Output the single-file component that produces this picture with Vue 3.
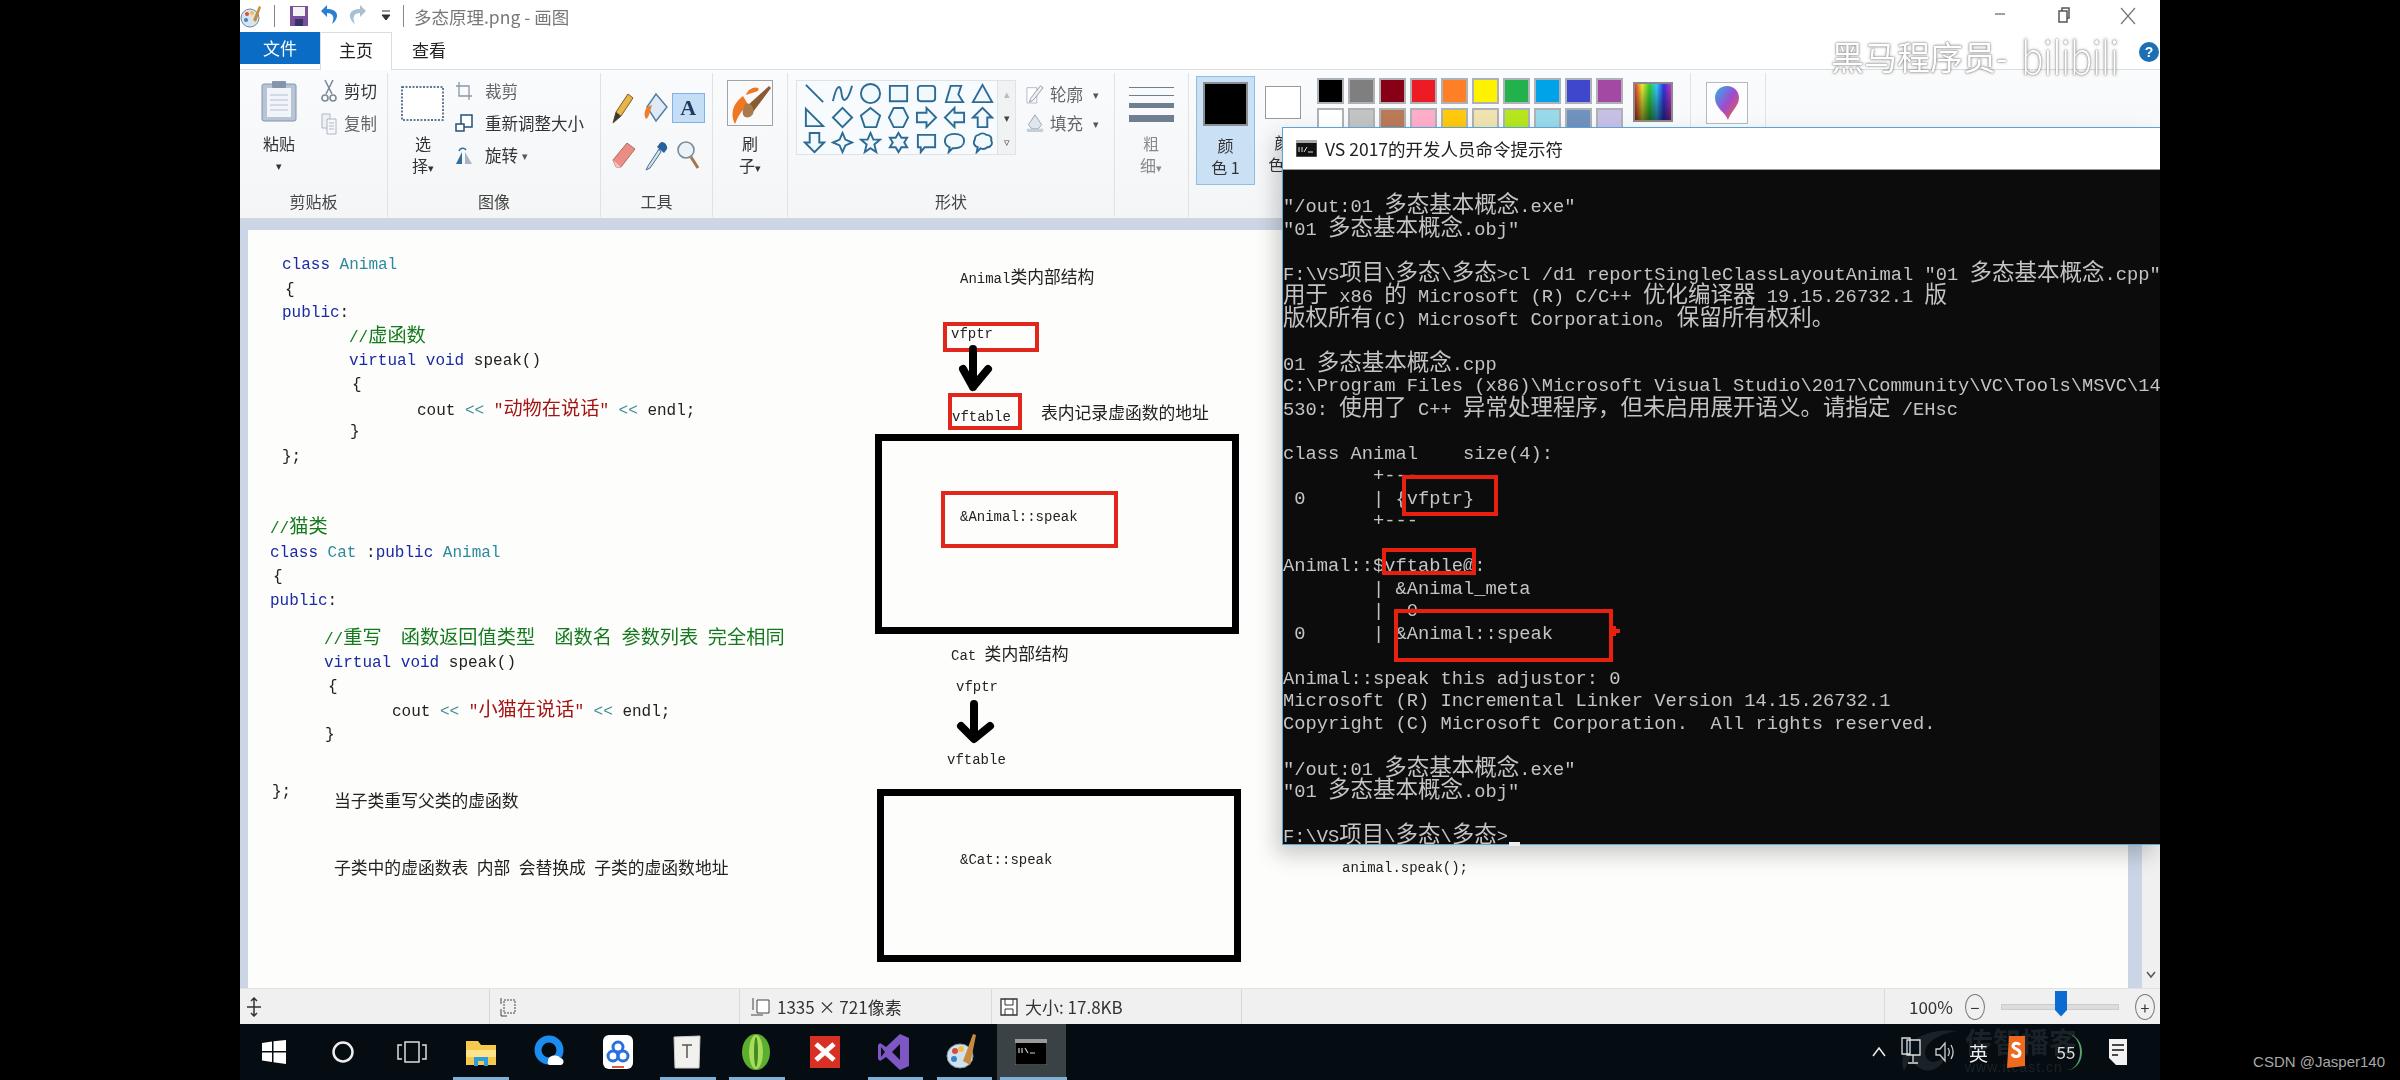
<template>
  <div class="page">
    <div class="screen">
      <!-- quick access + title -->
      <div class="titlebar">
        <svg class="q-paint" width="22" height="24" viewBox="0 0 22 24">
          <ellipse cx="10" cy="14" rx="9" ry="9" fill="#d8e4ee" stroke="#6a8aa0" />
          <circle cx="7" cy="10" r="2" fill="#e8483a" />
          <circle cx="12" cy="9" r="2" fill="#f1c232" />
          <circle cx="6" cy="16" r="2" fill="#3d85c6" />
          <path d="M13 16L19 2l2 1-5 15z" fill="#c98a3c" />
        </svg>
        <span class="q-sep q-sep-a"></span>
        <svg class="q-save" width="20" height="24" viewBox="0 0 20 24">
          <path d="M1 2h18v20H1z" fill="#7a4f9c" />
          <path d="M4 3h12v9H4z" fill="#f3f3f3" />
          <path d="M6 15h8v7H6z" fill="#37336a" />
        </svg>
        <svg class="q-undo" width="20" height="26" viewBox="0 0 20 26">
          <path d="M7 2L1 8l6 6V10c6 0 8 4 5 11 7-5 8-15-5-15z" fill="#2a7fd0" />
        </svg>
        <svg class="q-redo" width="20" height="26" viewBox="0 0 20 26">
          <path d="M13 2l6 6-6 6V10C7 10 5 14 8 21 1 16 0 6 13 6z" fill="#a9bfd2" />
        </svg>
        <svg class="q-more" width="10" height="12" viewBox="0 0 10 12">
          <path d="M1 1h8M1 5h8l-4 5z" fill="#333" stroke="#333" />
        </svg>
        <span class="q-sep q-sep-b"></span>
        <span class="doc-title">多态原理.png - 画图</span>
        <div class="win-btns">
          <span class="win-btn">
            <svg width="16" height="16" viewBox="0 0 16 16"><path d="M3 8h10" stroke="#777" stroke-width="1.4" /></svg>
          </span>
          <span class="win-btn">
            <svg width="16" height="18" viewBox="0 0 16 18"><path d="M3 5h8v11H3zM6 5V2h7v10h-2" fill="none" stroke="#555" stroke-width="1.5" /></svg>
          </span>
          <span class="win-btn">
            <svg width="18" height="20" viewBox="0 0 18 20"><path d="M2 2l14 16M16 2L2 18" stroke="#777" stroke-width="1.2" /></svg>
          </span>
        </div>
      </div>

      <!-- tabs -->
      <div class="tabs">
        <span class="tab tab-file">文件</span>
        <span class="tab tab-home">主页</span>
        <span class="tab tab-view">查看</span>
      </div>

      <!-- ribbon -->
      <div class="ribbon">
        <section class="group g-clip">
          <div class="group-body">
            <div class="big big-paste">
              <svg width="36" height="42" viewBox="0 0 36 42">
                <rect x="1" y="4" width="34" height="37" rx="2" fill="#b7c4d6" stroke="#8494aa" />
                <rect x="6" y="8" width="24" height="29" fill="#f1f4f9" />
                <rect x="11" y="1" width="14" height="7" rx="1" fill="#8494aa" />
                <path d="M9 15h18M9 20h18M9 25h18M9 30h18" stroke="#b5c0d0" />
              </svg>
              <span class="big-text">粘贴</span>
              <span class="big-text caret">▾</span>
            </div>
            <div class="small-col">
              <div class="small-row">
                <svg width="16" height="24" viewBox="0 0 16 24">
                  <path d="M4 1l7 14M12 1L5 15" stroke="#7c8a99" stroke-width="1.6" />
                  <circle cx="4" cy="19" r="3" fill="none" stroke="#7c8a99" stroke-width="1.6" />
                  <circle cx="12" cy="19" r="3" fill="none" stroke="#7c8a99" stroke-width="1.6" />
                </svg>
                <span>剪切</span>
              </div>
              <div class="small-row off">
                <svg width="16" height="24" viewBox="0 0 16 24">
                  <path d="M1 3h8v14H1z" fill="#eef1f5" stroke="#aeb8c4" />
                  <path d="M6 8h9v15H6z" fill="#f6f8fa" stroke="#aeb8c4" />
                  <path d="M8 12h5M8 15h5M8 18h5" stroke="#aeb8c4" />
                </svg>
                <span>复制</span>
              </div>
            </div>
          </div>
          <div class="group-label">剪贴板</div>
        </section>

        <section class="group g-image">
          <div class="group-body">
            <div class="big big-select">
              <svg width="44" height="42" viewBox="0 0 44 42">
                <rect x="1" y="7" width="41" height="33" fill="#fff" stroke="#2f4f70" stroke-width="1.5" stroke-dasharray="2 1.5" />
              </svg>
              <span class="big-text">选</span>
              <span class="big-text">择<i class="caret">▾</i></span>
            </div>
            <div class="small-col">
              <div class="small-row off">
                <svg width="18" height="20" viewBox="0 0 18 20">
                  <path d="M4 1v14h13M1 5h13v14" fill="none" stroke="#8b97a5" stroke-width="1.3" />
                </svg>
                <span>裁剪</span>
              </div>
              <div class="small-row">
                <svg width="18" height="20" viewBox="0 0 18 20">
                  <path d="M6 2h11v12H6z" fill="#fff" stroke="#23527c" stroke-width="1.5" />
                  <path d="M1 11h8v7H1z" fill="#fff" stroke="#23527c" stroke-width="1.5" />
                </svg>
                <span>重新调整大小</span>
              </div>
              <div class="small-row">
                <svg width="18" height="20" viewBox="0 0 18 20">
                  <path d="M7 7L1 19h6z" fill="#2e6fa3" />
                  <path d="M10 7l7 12h-7z" fill="#aab4c0" />
                  <path d="M4 6c1-3 5-4 7-1" fill="none" stroke="#2e6fa3" stroke-width="1.5" />
                </svg>
                <span>旋转</span><i class="caret caret-side">▾</i>
              </div>
            </div>
          </div>
          <div class="group-label">图像</div>
        </section>

        <section class="group g-tools">
          <div class="group-body">
            <div class="tool-grid">
              <span class="tool">
                <svg width="24" height="34" viewBox="0 0 24 34">
                  <path d="M2 32l3-11L17 3l5 4-12 18z" fill="#e9b44c" stroke="#7a5a20" />
                  <path d="M2 32l3-11 5 4z" fill="#3a3a3a" />
                </svg>
              </span>
              <span class="tool">
                <svg width="26" height="34" viewBox="0 0 26 34">
                  <path d="M13 3l11 13-11 14L4 16z" fill="#dfeaf4" stroke="#4c7da3" stroke-width="1.4" />
                  <path d="M4 16c-3 4-3 9-1 12 3-1 4-8 6-14z" fill="#ef7d31" />
                </svg>
              </span>
              <span class="tool tool-on">A</span>
              <span class="tool">
                <svg width="26" height="30" viewBox="0 0 26 30">
                  <path d="M3 20L17 3l8 6L11 27H6z" fill="#ea8d84" stroke="#b86a63" />
                  <path d="M3 20l8 7H6z" fill="#f4c3bd" />
                </svg>
              </span>
              <span class="tool">
                <svg width="24" height="32" viewBox="0 0 24 32">
                  <path d="M15 10l-11 17-2 4 4-2 11-16z" fill="#cfe2f2" stroke="#4c6d8a" />
                  <path d="M13 8l7 6 3-4c1-4-4-9-7-6z" fill="#26639c" />
                </svg>
              </span>
              <span class="tool">
                <svg width="24" height="32" viewBox="0 0 24 32">
                  <circle cx="10" cy="11" r="8" fill="#eaf3fa" stroke="#7b8a98" stroke-width="1.6" />
                  <path d="M15 18l7 11" stroke="#a5754c" stroke-width="3" />
                </svg>
              </span>
            </div>
          </div>
          <div class="group-label">工具</div>
        </section>

        <section class="group g-brush">
          <div class="group-body">
            <div class="big big-brush">
              <svg width="46" height="46" viewBox="0 0 46 46">
                <rect x="0.5" y="0.5" width="45" height="45" fill="#fafafa" stroke="#9da3a8" />
                <path d="M8 44C2 32 8 22 16 16l6 10c-6 2-10 8-14 18z" fill="#ef7722" />
                <path d="M22 10C30 4 36 10 28 12S16 18 22 10z" fill="#ef7722" />
                <path d="M20 26l22-20 2 2-18 24z" fill="#8a5a30" />
                <path d="M18 24c6-2 10 4 8 10-4 6-12 4-10-4z" fill="#a97b4b" />
              </svg>
              <span class="big-text">刷</span>
              <span class="big-text">子<i class="caret">▾</i></span>
            </div>
          </div>
          <div class="group-label">&nbsp;</div>
        </section>

        <section class="group g-shapes">
          <div class="group-body">
            <div class="gallery">
              <div class="shape-grid">
                <svg v-for="(d, i) in shapePaths" :key="i" width="23" height="23" viewBox="0 0 24 24">
                  <path :d="d" fill="#f2f9fd" stroke="#2c6b94" stroke-width="2" />
                </svg>
              </div>
              <div class="gallery-scroll">
                <span class="off-glyph">▴</span>
                <span>▾</span>
                <span>▿</span>
              </div>
            </div>
            <div class="outline-col">
              <div class="small-row off">
                <svg width="20" height="22" viewBox="0 0 20 22">
                  <path d="M1 4h11v17H1z" fill="#fff" stroke="#aab6c2" />
                  <path d="M5 16L16 2l3 2L8 18l-4 2z" fill="#eef2f6" stroke="#8b97a5" />
                </svg>
                <span>轮廓</span><i class="caret caret-side">▾</i>
              </div>
              <div class="small-row off">
                <svg width="22" height="24" viewBox="0 0 22 24">
                  <path d="M11 2l8 12-4 5H7l-4-5z" fill="#dfe7ef" stroke="#8b97a5" />
                  <path d="M1 19h20v4H1z" fill="#c3cfdb" />
                </svg>
                <span>填充</span><i class="caret caret-side">▾</i>
              </div>
            </div>
          </div>
          <div class="group-label">形状</div>
        </section>

        <section class="group g-size">
          <div class="group-body">
            <div class="big big-lines">
              <div class="lines">
                <i class="l1"></i><i class="l2"></i><i class="l3"></i><i class="l4"></i>
              </div>
              <span class="big-text off">粗</span>
              <span class="big-text off">细<i class="caret">▾</i></span>
            </div>
          </div>
          <div class="group-label">&nbsp;</div>
        </section>

        <section class="group g-colors">
          <div class="group-body">
            <div class="color-pick color-one">
              <span class="color-chip chip-black"></span>
              <span class="big-text">颜</span>
              <span class="big-text">色 1</span>
            </div>
            <div class="color-pick color-two">
              <span class="color-chip chip-white"></span>
              <span class="big-text">颜</span>
              <span class="big-text">色 2</span>
            </div>
            <div class="swatches">
              <span v-for="c in swatches" :key="c" class="swatch" :style="{ background: c }"></span>
            </div>
            <div class="rainbow"></div>
          </div>
        </section>

        <section class="group g-p3d">
          <div class="group-body">
            <div class="p3d">
              <svg width="26" height="36" viewBox="0 0 26 36">
                <defs>
                  <linearGradient id="p3dfill" x1="0" y1="0" x2="1" y2="1">
                    <stop offset="0" stop-color="#27b6e8" />
                    <stop offset="0.5" stop-color="#a14ad0" />
                    <stop offset="1" stop-color="#f4622a" />
                  </linearGradient>
                </defs>
                <path d="M13 1c7 0 12 5 12 12 0 8-8 13-11 22-2-7-13-12-13-22C1 6 6 1 13 1z" fill="url(#p3dfill)" />
              </svg>
            </div>
          </div>
        </section>
      </div>

      <!-- canvas area -->
      <div class="workspace">
        <div class="paper">
          <svg class="paint-shapes" width="1880" height="757" viewBox="248 230 1880 757">
            <g fill="none" stroke="#000" stroke-width="7">
              <rect x="878.5" y="437.5" width="357" height="193" />
              <rect x="880.5" y="792.5" width="357" height="166" />
            </g>
            <g fill="none" stroke="#e1261c" stroke-width="4">
              <rect x="945" y="324" width="92" height="26" />
              <rect x="950" y="395" width="70" height="33" />
              <rect x="943" y="493" width="173" height="53" />
            </g>
            <g fill="none" stroke="#000" stroke-width="8" stroke-linecap="round" stroke-linejoin="round">
              <path d="M973 349v38M963 369l10 18 15-18" />
              <path d="M974 704v34M961 726l13 13 16-13" />
            </g>
          </svg>
          <div
            v-for="(item, i) in paintItems"
            :key="i"
            class="paint-text"
            :class="item.big ? 'code' : 'label'"
            :style="{ left: item.x - 248 + 'px', top: item.y - 242 + 'px' }"
          >
            <span v-for="(s, j) in item.parts" :key="j" :class="[s.c, { cjk: s.cjk }]">{{ s.t }}</span>
          </div>
        </div>
        <div class="side-gap"></div>
        <div class="scrollbar">
          <svg width="12" height="10" viewBox="0 0 12 10"><path d="M2 2l4 5 4-5" fill="none" stroke="#555" stroke-width="1.5" /></svg>
        </div>
      </div>

      <!-- status bar -->
      <div class="statusbar">
        <div class="st st-1">
          <svg width="18" height="20" viewBox="0 0 18 20"><path d="M9 1v18M2 10h14M6 4l3-3 3 3M6 16l3 3 3-3" fill="none" stroke="#333" stroke-width="1.5" /></svg>
        </div>
        <div class="st st-2">
          <svg width="18" height="20" viewBox="0 0 18 20"><path d="M5 3h11v13H5z" fill="none" stroke="#444" stroke-dasharray="2 1" /><path d="M2 1v6M2 12v7h6" fill="none" stroke="#444" /></svg>
        </div>
        <div class="st st-3">
          <svg width="20" height="20" viewBox="0 0 20 20"><path d="M7 3h12v13H7z" fill="#fff" stroke="#444" /><path d="M3 1v12M1 18h12" fill="none" stroke="#444" /></svg>
          <span>1335 × 721像素</span>
        </div>
        <div class="st st-4">
          <svg width="18" height="20" viewBox="0 0 18 20"><path d="M1 2h16v16H1z" fill="#fff" stroke="#333" stroke-width="1.3" /><path d="M5 2v6h8V2M5 18v-6h8v6" fill="none" stroke="#333" /></svg>
          <span>大小: 17.8KB</span>
        </div>
        <div class="st st-5"></div>
        <div class="st st-zoom">
          <span class="pct">100%</span>
          <span class="zoom-btn">−</span>
          <span class="slider"><i class="thumb"></i></span>
          <span class="zoom-btn">+</span>
        </div>
      </div>

      <!-- taskbar -->
      <div class="taskbar">
        <span v-for="t in runningMarks" :key="t[0]" class="task-mark" :style="{ left: t[0] + 'px', width: t[1] + 'px' }"></span>
        <div class="task-icons">
          <span class="task">
            <svg width="24" height="24" viewBox="0 0 24 24"><path d="M0 3l10-1.5V11H0zM11.5 1.3L24 0v11H11.5zM0 12.5h10V22L0 20.5zM11.5 12.5H24V24l-12.5-1.7z" fill="#fff" /></svg>
          </span>
          <span class="task">
            <svg width="24" height="24" viewBox="0 0 24 24"><circle cx="12" cy="12" r="9.5" fill="none" stroke="#eee" stroke-width="2.5" /></svg>
          </span>
          <span class="task">
            <svg width="30" height="24" viewBox="0 0 30 24"><path d="M8 2h14v20H8zM5 5H1v14h4M25 5h4v14h-4" fill="none" stroke="#ddd" stroke-width="1.5" /></svg>
          </span>
          <span class="task">
            <svg width="32" height="28" viewBox="0 0 32 28"><path d="M1 3h12l3 4h15v20H1z" fill="#f4c94e" /><path d="M1 12h30v7H1z" fill="#fde38a" /><path d="M9 19h14v9h-4v-5h-6v5H9z" fill="#2a9fdc" /></svg>
          </span>
          <span class="task">
            <svg width="32" height="34" viewBox="0 0 32 34"><circle cx="15" cy="15" r="11" fill="none" stroke="#1d8cf0" stroke-width="7" /><path d="M14 26c0-6 10-7 12-3 4 0 5 6 1 7H16c-2 0-3-2-2-4z" fill="#fff" /></svg>
          </span>
          <span class="task">
            <svg width="32" height="36" viewBox="0 0 32 36"><rect x="1" y="1" width="30" height="34" rx="6" fill="#fff" /><circle cx="16" cy="13" r="5" fill="none" stroke="#2a6fe0" stroke-width="3" /><circle cx="11" cy="22" r="5" fill="none" stroke="#2a6fe0" stroke-width="3" /><circle cx="21" cy="22" r="5" fill="none" stroke="#2a6fe0" stroke-width="3" /><path d="M10 33h12" stroke="#e0583a" stroke-width="2" /></svg>
          </span>
          <span class="task">
            <svg width="30" height="34" viewBox="0 0 30 34"><path d="M2 2l26-1-1 32H3z" fill="#f1f1ee" stroke="#ccc" /><path d="M10 10h10M15 10v13" stroke="#555" stroke-width="1.5" /></svg>
          </span>
          <span class="task">
            <svg width="30" height="38" viewBox="0 0 30 38"><ellipse cx="15" cy="19" rx="14" ry="18" fill="#5cae2e" /><ellipse cx="15" cy="19" rx="7" ry="17" fill="#a9dc5c" /><ellipse cx="15" cy="19" rx="2" ry="15" fill="#3e8a1f" /></svg>
          </span>
          <span class="task">
            <svg width="30" height="32" viewBox="0 0 30 32"><rect width="30" height="32" fill="#d93025" /><path d="M6 8l18 16M24 8L6 24" stroke="#fff" stroke-width="5" /></svg>
          </span>
          <span class="task">
            <svg width="32" height="38" viewBox="0 0 32 38"><path d="M22 1l9 4v28l-9 4L8 24l-6 4-2-2V12l2-2 6 4zM22 11l-8 8 8 8z" fill="#7e57c2" /><path d="M3 14l4 5-4 5z" fill="#0b1116" /></svg>
          </span>
          <span class="task">
            <svg width="32" height="38" viewBox="0 0 32 38"><ellipse cx="14" cy="23" rx="13" ry="12" fill="#cfe2ee" stroke="#7c9bb0" /><circle cx="9" cy="18" r="3" fill="#d94a3c" /><circle cx="15" cy="16" r="3" fill="#f0c33c" /><circle cx="8" cy="26" r="3" fill="#3a84c6" /><path d="M17 28L27 1l3 1-6 30z" fill="#c98a3c" /></svg>
          </span>
          <span class="task task-active">
            <svg width="32" height="26" viewBox="0 0 32 26">
              <rect width="32" height="26" fill="#000" stroke="#888" />
              <path d="M0 0h32v4H0z" fill="#9a9a9a" />
              <path d="M4 9v5M7 9v5M10 9l3 5M15 14h5" stroke="#ccc" stroke-width="1.2" fill="none" />
            </svg>
          </span>
        </div>
        <svg class="itcast-mark" width="64" height="50" viewBox="0 0 64 50">
          <path d="M8 44C0 20 24 0 62 4 36 8 26 20 30 30c4 8 14 6 20-4-2 16-18 22-28 14-4-3-6-8-5-14-4 6-6 12-9 18z" fill="#1a2228" />
        </svg>
        <div class="itcast">
          <span class="itcast-cn">传智播客</span>
          <span class="itcast-en">www.itcast.cn</span>
        </div>
        <div class="tray">
          <svg width="16" height="12" viewBox="0 0 16 12"><path d="M2 10l6-8 6 8" fill="none" stroke="#eee" stroke-width="1.5" /></svg>
          <svg width="20" height="30" viewBox="0 0 20 30"><path d="M6 3h13v15H6zM1 1h8v16H1zM12 18v7M7 26h10" fill="#06101a" stroke="#ddd" stroke-width="1.3" /></svg>
          <svg width="20" height="26" viewBox="0 0 20 26"><path d="M1 10h4l5-6v18l-5-6H1zM13 9c2 3 2 5 0 8M16 6c3 5 3 9 0 14" fill="none" stroke="#ccc" stroke-width="1.3" /></svg>
          <span class="tray-lang">英</span>
          <svg class="tray-sogou" width="20" height="34" viewBox="0 0 20 34"><path d="M3 1h16v30L1 33z" fill="#ee6a1f" /><path d="M14 10c-2-3-7-2-7 1s7 3 7 7-6 5-8 1" fill="none" stroke="#fff" stroke-width="3" /></svg>
          <span class="tray-cpu">55</span>
          <svg width="20" height="28" viewBox="0 0 20 28"><path d="M1 1h18v26H8L1 20z" fill="#f2f2f2" /><path d="M4 7h12M4 12h12M4 17h6" stroke="#111" stroke-width="1.5" /></svg>
        </div>
      </div>

      <!-- floating console window -->
      <div class="console">
        <div class="con-title">
          <svg width="21" height="17" viewBox="0 0 21 17">
            <rect width="21" height="17" fill="#111" stroke="#888" />
            <path d="M0 0h21v3H0z" fill="#aaa" />
            <path d="M3 7v5M6 7v5M8 12l3-5M12 12h5" stroke="#ddd" fill="none" />
          </svg>
          <span>VS 2017的开发人员命令提示符</span>
        </div>
        <div class="con-body">
          <div v-for="(line, i) in consoleLines" :key="i" class="con-line"><span v-for="(s, j) in line" :key="j" :class="{ cjk: s.cjk }">{{ s.t }}</span></div>
          <span class="con-cursor"></span>
        </div>
        <svg class="con-marks" width="878" height="718" viewBox="1282 127 878 718">
          <g fill="none" stroke="#e8200f" stroke-width="4">
            <rect x="1404" y="477" width="92" height="37" />
            <rect x="1384" y="550" width="90" height="23" />
            <rect x="1396" y="611" width="215" height="49" />
            <path d="M1609 631h11M1614 626v10" />
          </g>
        </svg>
      </div>

      <!-- video watermark -->
      <div class="watermark">
        <span class="wm-cn">黑马程序员-</span>
        <span class="wm-bili">bilibili</span>
      </div>
      <span class="help-dot">?</span>
    </div>
    <span class="csdn">CSDN @Jasper140</span>
  </div>
</template>

<script setup>
const CJK = /([\u3000-\u9fff\uff00-\uffef]+)/

// 把一行拆成半角/全角片段，全角字按两列宽显示
const split = (text, c = '') =>
  text
    .split(CJK)
    .filter(Boolean)
    .map((t) => ({ t, c, cjk: CJK.test(t) }))

const tokens = (list) => list.flatMap(([t, c]) => split(t, c))

const cout = (str) =>
  tokens([
    ['cout ', ''],
    ['<< ', 'op'],
    [str, 'str'],
    [' << ', 'op'],
    ['endl;', '']
  ])

const code = (x, y, list) => ({ x, y, big: true, parts: tokens(list) })
const label = (x, y, text) => ({ x, y, big: false, parts: split(text) })

const paintItems = [
  code(282, 265, [['class ', 'kw'], ['Animal', 'ty']]),
  code(285, 290, [['{', '']]),
  code(282, 313, [['public', 'kw'], [':', '']]),
  code(349, 337, [['//虚函数', 'cm']]),
  code(349, 361, [['virtual void ', 'kw'], ['speak()', '']]),
  code(352, 385, [['{', '']]),
  { x: 417, y: 410, big: true, parts: cout('"动物在说话"') },
  code(350, 432, [['}', '']]),
  code(282, 457, [['};', '']]),
  code(270, 528, [['//猫类', 'cm']]),
  code(270, 553, [['class ', 'kw'], ['Cat ', 'ty'], [':', ''], ['public ', 'kw'], ['Animal', 'ty']]),
  code(273, 577, [['{', '']]),
  code(270, 601, [['public', 'kw'], [':', '']]),
  code(324, 639, [['//重写  函数返回值类型  函数名 参数列表 完全相同', 'cm']]),
  code(324, 663, [['virtual void ', 'kw'], ['speak()', '']]),
  code(328, 687, [['{', '']]),
  { x: 392, y: 711, big: true, parts: cout('"小猫在说话"') },
  code(325, 735, [['}', '']]),
  code(272, 792, [['};', '']]),
  label(334, 803, '当子类重写父类的虚函数'),
  label(334, 870, '子类中的虚函数表 内部 会替换成 子类的虚函数地址'),
  label(960, 279, 'Animal类内部结构'),
  label(951, 334, 'vfptr'),
  label(952, 417, 'vftable'),
  label(1041, 415, '表内记录虚函数的地址'),
  label(960, 517, '&Animal::speak'),
  label(951, 656, 'Cat 类内部结构'),
  label(956, 687, 'vfptr'),
  label(947, 760, 'vftable'),
  label(960, 860, '&Cat::speak'),
  label(1342, 868, 'animal.speak();')
]

const consoleText = [
  '"/out:01 多态基本概念.exe"',
  '"01 多态基本概念.obj"',
  '',
  'F:\\VS项目\\多态\\多态>cl /d1 reportSingleClassLayoutAnimal "01 多态基本概念.cpp"',
  '用于 x86 的 Microsoft (R) C/C++ 优化编译器 19.15.26732.1 版',
  '版权所有(C) Microsoft Corporation。保留所有权利。',
  '',
  '01 多态基本概念.cpp',
  'C:\\Program Files (x86)\\Microsoft Visual Studio\\2017\\Community\\VC\\Tools\\MSVC\\14',
  '530: 使用了 C++ 异常处理程序，但未启用展开语义。请指定 /EHsc',
  '',
  'class Animal    size(4):',
  '        +---',
  ' 0      | {vfptr}',
  '        +---',
  '',
  'Animal::$vftable@:',
  '        | &Animal_meta',
  '        |  0',
  ' 0      | &Animal::speak',
  '',
  'Animal::speak this adjustor: 0',
  'Microsoft (R) Incremental Linker Version 14.15.26732.1',
  'Copyright (C) Microsoft Corporation.  All rights reserved.',
  '',
  '"/out:01 多态基本概念.exe"',
  '"01 多态基本概念.obj"',
  '',
  'F:\\VS项目\\多态\\多态>'
]

const consoleLines = consoleText.map((l) => split(l))

const swatches = [
  '#000000', '#7f7f7f', '#880015', '#ed1c24', '#ff7f27', '#fff200', '#22b14c', '#00a2e8', '#3f48cc', '#a349a4',
  '#ffffff', '#c3c3c3', '#b97a57', '#ffaec9', '#ffc90e', '#efe4b0', '#b5e61d', '#99d9ea', '#7092be', '#c8bfe7'
]

const shapePaths = [
  'M3 3L21 21',
  'M2 20C6 2 10 2 11 12S17 22 22 4',
  'M2 12a10 10 0 1 0 20 0a10 10 0 1 0-20 0',
  'M3 4h18v16H3z',
  'M6 4h12a3 3 0 0 1 3 3v10a3 3 0 0 1-3 3H6a3 3 0 0 1-3-3V7a3 3 0 0 1 3-3z',
  'M3 21L8 4h11l-3 9 5 8z',
  'M12 3L22 21H2z',
  'M3 3L21 21H3z',
  'M12 2L22 12 12 22 2 12z',
  'M12 2L22 10 18 22H6L2 10z',
  'M7 2h10l5 10-5 10H7L2 12z',
  'M2 7h10V2l10 10-10 10v-5H2z',
  'M22 7H12V2L2 12l10 10v-5h10z',
  'M7 22V12H2L12 2l10 10h-5v10z',
  'M7 2v10H2l10 10 10-10h-5V2z',
  'M12 2l3 7 7 3-7 3-3 7-3-7-7-3 7-3z',
  'M12 2l3 7h7l-6 5 2 8-6-4-6 4 2-8-6-5h7z',
  'M12 2l3 5h6l-3 5 3 5h-6l-3 5-3-5H3l3-5-3-5h6z',
  'M3 4h18v13H10l-4 5v-5H3z',
  'M12 3c6 0 10 3 10 7.5S18 18 12 18h-2l-4 4 1-5c-3-1-5-3.5-5-6.5C2 6 6 3 12 3z',
  'M8 4c2-2 6-2 8 0 4 0 6 3 5 6 2 3 0 7-4 7-2 2-5 2-7 1l-4 4 1-5c-4-1-5-5-3-8 0-3 2-5 4-5z'
]

// 任务栏上运行中程序的下划线 [left, width]，相对屏幕左边
const runningMarks = [
  [213, 56],
  [420, 56],
  [489, 56],
  [628, 55],
  [697, 55],
  [760, 67]
]
</script>

<style>
html,
body {
  margin: 0;
  background: #000;
  overflow: hidden;
}
</style>

<style scoped>
.page {
  width: 2400px;
  height: 1080px;
  background: #000;
  display: flex;
  justify-content: center;
  position: relative;
  font-family: "Noto Sans CJK SC", "Liberation Sans", sans-serif;
  color: #3a3a3a;
}

/* 原图是视频截帧，整体略糊 */
.screen {
  width: 1920px;
  height: 1080px;
  position: relative;
  overflow: hidden;
  display: flex;
  flex-direction: column;
  background: #fff;
  filter: blur(0.45px);
}

.csdn {
  position: absolute;
  right: 15px;
  top: 1051px;
  font-size: 15px;
  line-height: 22px;
  white-space: nowrap;
  color: #a8a8a8;
  font-family: "Liberation Sans", sans-serif;
}

/* title bar */
.titlebar {
  height: 32px;
  display: flex;
  align-items: center;
  flex-shrink: 0;
}

.q-sep {
  width: 1px;
  height: 22px;
  background: #888;
}

.q-sep-a {
  margin-left: 12px;
}

.q-sep-b {
  margin-left: 12px;
}

.q-save {
  margin-left: 14px;
}

.q-undo {
  margin-left: 11px;
}

.q-redo {
  margin-left: 7px;
}

.q-more {
  margin-left: 14px;
}

.doc-title {
  margin-left: 10px;
  font-size: 17.5px;
  color: #777;
}

.win-btns {
  margin-left: auto;
  display: flex;
}

.win-btn {
  width: 64px;
  display: flex;
  justify-content: center;
}

/* tabs */
.tabs {
  height: 38px;
  display: flex;
  flex-shrink: 0;
  align-items: flex-start;
  border-bottom: 1px solid #dcdcdc;
  box-sizing: border-box;
}

.tab {
  font-size: 17px;
  line-height: 32px;
  text-align: center;
}

.tab-file {
  width: 80px;
  background: #0a6cc4;
  color: #fff;
}

.tab-home {
  width: 72px;
  height: 38px;
  background: #fff;
  border: 1px solid #dcdcdc;
  border-bottom: 0;
  box-sizing: border-box;
  color: #222;
  line-height: 34px;
}

.tab-view {
  margin-left: 20px;
  color: #222;
  line-height: 36px;
}

/* ribbon */
.ribbon {
  height: 148px;
  flex-shrink: 0;
  display: flex;
  background: linear-gradient(#fafbfc, #f4f5f6);
}

.group {
  display: flex;
  flex-direction: column;
  box-sizing: border-box;
  margin: 3px 0 1px;
  border-right: 1px solid #e0e2e4;
}

.group-body {
  flex: 1;
  display: flex;
  padding-top: 2px;
  min-height: 0;
}

.group-label {
  height: 28px;
  line-height: 24px;
  text-align: center;
  font-size: 16px;
  color: #444;
}

.g-clip {
  width: 148px;
}

.g-image {
  width: 213px;
}

.g-tools {
  width: 112px;
}

.g-brush {
  width: 75px;
}

.g-shapes {
  width: 327px;
}

.g-size {
  width: 74px;
}

.g-colors {
  width: 502px;
}

.g-p3d {
  width: 75px;
}

.big {
  display: flex;
  flex-direction: column;
  align-items: center;
  padding-top: 5px;
}

.big > svg {
  margin-bottom: 10px;
}

.big-text {
  font-size: 16px;
  line-height: 22px;
  color: #333;
}

.big-text.off {
  color: #8a8a8a;
}

.caret {
  font-style: normal;
  font-size: 11px;
}

.caret-side {
  margin-left: 4px;
  color: #555;
}

.big-paste {
  width: 78px;
}

.small-col {
  display: flex;
  flex-direction: column;
}

.small-row {
  height: 32px;
  display: flex;
  align-items: center;
  gap: 6px;
  font-size: 16.5px;
  color: #333;
  white-space: nowrap;
}

.small-row.off {
  color: #666;
}

.small-row > svg {
  width: 18px;
  flex-shrink: 0;
}

.g-clip .small-col {
  margin-left: 2px;
}

.big-select {
  width: 44px;
  margin-left: 13px;
}

.g-image .small-col {
  margin-left: 10px;
}

.g-image .small-row {
  gap: 12px;
}

.g-image .caret-side {
  margin-left: -8px;
}

.tool-grid {
  margin: 18px 0 0 6px;
  display: grid;
  grid-template-columns: repeat(3, 32.5px);
  grid-template-rows: 30px 30px;
  row-gap: 17px;
}

.tool {
  display: flex;
  align-items: center;
  justify-content: center;
}

.tool-on {
  background: #c5def5;
  border: 1px solid #7eb4ea;
  box-sizing: border-box;
  font: bold 22px "Liberation Serif", serif;
  color: #1f3a5f;
}

.big-brush {
  width: 46px;
  margin-left: 14px;
}

.big-brush > svg {
  margin-bottom: 6px;
}

.gallery {
  margin: 5px 0 0 8px;
  width: 220px;
  height: 75px;
  display: flex;
  background: #f8fbfd;
  border: 1px solid #dfe3e7;
  box-sizing: border-box;
}

.shape-grid {
  width: 200px;
  display: grid;
  grid-template-columns: repeat(7, 28px);
  grid-auto-rows: 24.5px;
  justify-items: center;
  align-items: center;
  padding-left: 3px;
  box-sizing: border-box;
}

.gallery-scroll {
  flex: 1;
  display: flex;
  flex-direction: column;
  align-items: center;
  justify-content: space-around;
  font-size: 11px;
  line-height: 1;
  background: #f1f2f3;
  border-left: 1px solid #dfe3e7;
  color: #444;
}

.off-glyph {
  color: #bbb;
}

.outline-col {
  margin-left: 10px;
  padding-top: 4px;
  display: flex;
  flex-direction: column;
}

.outline-col .small-row {
  height: 29px;
}

.big-lines {
  width: 46px;
  margin-left: 13px;
}

.lines {
  width: 45px;
  height: 42px;
  margin-bottom: 10px;
  display: flex;
  flex-direction: column;
  padding-top: 7px;
  box-sizing: border-box;
}

.lines i {
  display: block;
  background: #6f7f90;
}

.lines .l1 {
  height: 1px;
}

.lines .l2 {
  height: 2px;
  margin-top: 7px;
}

.lines .l3 {
  height: 5px;
  margin-top: 7px;
}

.lines .l4 {
  height: 9px;
  margin-top: 7px;
}

.color-pick {
  display: flex;
  flex-direction: column;
  align-items: center;
}

.color-one {
  width: 59px;
  height: 109px;
  margin: 1px 0 0 7px;
  background: #c9e0f5;
  border: 1px solid #8fbde4;
  box-sizing: border-box;
}

.color-one .color-chip {
  margin-top: 5px;
}

.color-two {
  width: 55px;
  margin-top: 11px;
}

.color-chip {
  display: block;
  box-sizing: border-box;
  margin-bottom: 8px;
}

.chip-black {
  width: 45px;
  height: 44px;
  background: #000;
  border: 2px solid #8a8f95;
}

.chip-white {
  width: 36px;
  height: 33px;
  margin-bottom: 12px;
  background: #fff;
  border: 1px solid #999;
}

.swatches {
  margin: 3px 0 0 7px;
  display: grid;
  grid-template-columns: repeat(10, 27px);
  grid-auto-rows: 26px;
  gap: 4px;
}

.swatch {
  border: 2px solid #aeb2b6;
  box-sizing: border-box;
}

.rainbow {
  width: 40px;
  height: 40px;
  margin: 7px 0 0 10px;
  border: 2px solid #8a8a8a;
  box-sizing: border-box;
  background: linear-gradient(#ffffff00, #0008), linear-gradient(90deg, #e33, #ee3, #3c3, #3cf, #33d, #c3c);
}

.g-p3d .group-body {
  padding: 9px 0 0 15px;
}

.p3d {
  width: 42px;
  height: 42px;
  background: #fdfdfd;
  border: 1px solid #b9b9b9;
  box-sizing: border-box;
  display: flex;
  align-items: center;
  justify-content: center;
}

/* workspace */
.workspace {
  flex: 1;
  min-height: 0;
  display: flex;
  padding: 12px 0 0 8px;
  background: linear-gradient(#cfd6e2, #cbd5e6 12px);
}

.paper {
  width: 1880px;
  background: #fdfdfb;
  position: relative;
  overflow: hidden;
}

.paint-shapes {
  position: absolute;
  left: 0;
  top: 0;
}

.paint-text {
  position: absolute;
  line-height: 24px;
  white-space: pre;
  font-family: "Liberation Mono", "Noto Sans CJK SC", monospace;
  color: #222;
}

.paint-text.code {
  font-size: 16px;
}

.paint-text.label {
  font-size: 14px;
}

.cjk {
  font-size: 1.2em;
}

.kw {
  color: #1a2aa6;
}

.ty {
  color: #2b8a9f;
}

.cm {
  color: #157a1f;
}

.str {
  color: #a31515;
}

.op {
  color: #3c8c94;
}

.side-gap {
  width: 14px;
  background: #cbd5e6;
}

.scrollbar {
  flex: 1;
  background: #f0f0f0;
  display: flex;
  align-items: flex-end;
  justify-content: center;
  padding-bottom: 8px;
}

/* status bar */
.statusbar {
  height: 36px;
  flex-shrink: 0;
  display: flex;
  background: #f0f0f0;
  border-top: 1px solid #e2e2e2;
  box-sizing: border-box;
  font-size: 17px;
  color: #333;
}

.st {
  display: flex;
  align-items: center;
  gap: 7px;
  border-right: 1px solid #d9d9d9;
  box-sizing: border-box;
}

.st-1 {
  width: 250px;
  padding-left: 5px;
}

.st-2 {
  width: 250px;
  padding-left: 9px;
}

.st-3 {
  width: 252px;
  padding-left: 10px;
}

.st-4 {
  width: 250px;
  padding-left: 8px;
}

.st-5 {
  width: 643px;
}

.st-zoom {
  flex: 1;
  border: 0;
  padding-left: 24px;
  gap: 0;
}

.pct {
  width: 56px;
}

.zoom-btn {
  width: 20px;
  height: 26px;
  border: 1px solid #777;
  border-radius: 50%;
  box-sizing: border-box;
  display: flex;
  align-items: center;
  justify-content: center;
  font-size: 16px;
  line-height: 1;
  flex-shrink: 0;
}

.slider {
  width: 118px;
  height: 6px;
  margin: 0 16px;
  background: #dcdcdc;
  border: 1px solid #ccc;
  box-sizing: border-box;
  position: relative;
}

.thumb {
  position: absolute;
  left: 53px;
  top: -14px;
  width: 12px;
  height: 26px;
  background: #0a6cd0;
  clip-path: polygon(0 0, 100% 0, 100% 75%, 50% 100%, 0 75%);
}

/* taskbar */
.taskbar {
  height: 56px;
  flex-shrink: 0;
  position: relative;
  display: flex;
  align-items: stretch;
  background: #060d12;
}

.task-mark {
  position: absolute;
  bottom: 0;
  height: 3px;
  background: #7fb0d8;
}

.task-icons {
  display: flex;
}

.task {
  width: 68.8px;
  display: flex;
  align-items: center;
  justify-content: center;
}

.task-active {
  background: #3b4246;
}

.itcast-mark {
  position: absolute;
  left: 1656px;
  top: 3px;
}

.itcast {
  position: absolute;
  left: 1725px;
  top: 0;
  display: flex;
  flex-direction: column;
  color: #1a2228;
}

.itcast-cn {
  font-size: 28px;
  font-weight: 700;
  line-height: 34px;
}

.itcast-en {
  font: 14px/18px "Liberation Sans", sans-serif;
  letter-spacing: 1px;
}

.tray {
  margin-left: auto;
  margin-right: 32px;
  display: flex;
  align-items: center;
  gap: 14px;
  position: relative;
}

.tray-lang {
  color: #eee;
  font-size: 19px;
}

.tray-sogou {
  margin-left: 4px;
}

.tray-cpu {
  color: #ddd;
  font-size: 17px;
  width: 30px;
  height: 36px;
  margin: 0 12px;
  line-height: 36px;
  border-right: 2px solid #5aa06a;
  border-radius: 50%;
  box-sizing: border-box;
  text-align: center;
}

/* console */
.console {
  position: absolute;
  left: 1042px;
  top: 127px;
  width: 878px;
  height: 718px;
  background: #0c0c0c;
  border-top: 1px solid #5aa5d8;
  border-left: 1px solid #5aa5d8;
  border-bottom: 1px solid #5aa5d8;
  box-sizing: border-box;
  box-shadow: -6px 10px 20px rgba(0, 0, 0, 0.2);
}

.con-title {
  height: 42px;
  background: #fff;
  border-bottom: 1px solid #999;
  box-sizing: border-box;
  display: flex;
  align-items: center;
  gap: 8px;
  padding-left: 13px;
  font-size: 17.5px;
  color: #222;
}

.con-body {
  padding-top: 25px;
  font-family: "Liberation Mono", "Noto Sans CJK SC", monospace;
  font-size: 18.75px;
  line-height: 22.5px;
  color: #c4c4c4;
  position: relative;
}

.con-line {
  height: 22.5px;
  white-space: pre;
}

.con-line:nth-last-child(2) {
  height: 19px;
  line-height: 19px;
  padding-top: 2px;
}

.con-cursor {
  position: absolute;
  left: 226px;
  bottom: 0;
  width: 11px;
  height: 4px;
  background: #eee;
}

.con-marks {
  position: absolute;
  left: -1px;
  top: -1px;
}

/* watermark */
.watermark {
  position: absolute;
  left: 1591px;
  top: 34px;
  display: flex;
  align-items: center;
  gap: 14px;
  color: #fff;
  text-shadow: 0 0 3px #777, 0 0 1px #555;
}

.wm-cn {
  font-size: 33px;
  line-height: 44px;
}

.wm-bili {
  font: 300 40px/44px Lato, sans-serif;
  transform: scaleY(1.25);
}

.help-dot {
  position: absolute;
  left: 1899px;
  top: 42px;
  width: 20px;
  height: 20px;
  border-radius: 50%;
  background: #1a6fb5;
  color: #fff;
  font: bold 14px/20px "Liberation Sans", sans-serif;
  text-align: center;
}
</style>
